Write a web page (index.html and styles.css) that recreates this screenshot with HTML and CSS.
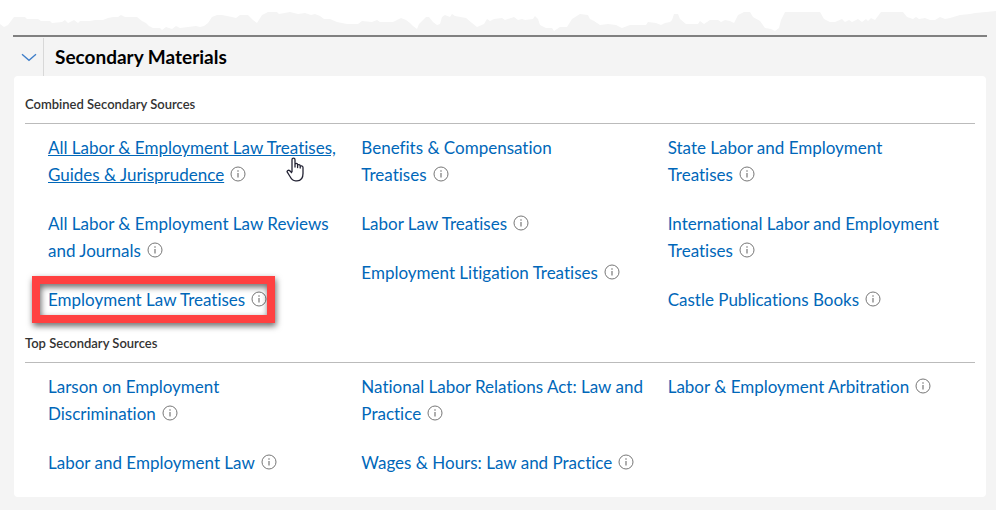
FILE: index.html
```html
<!DOCTYPE html>
<html lang="en">
<head>
    <title>Secondary Materials</title>
    <meta charset="UTF-8">
    <meta name="viewport" content="width=device-width, initial-scale=1.0">
    <link rel="stylesheet" href="styles.css">
</head>
<body>
    <svg width="0" height="0" class="sprite" aria-hidden="true">
        <symbol id="info" viewBox="0 0 16 16">
            <circle cx="8" cy="8" r="7" fill="none" stroke="#777" stroke-width="1"/>
            <path d="M8 7v4.5" stroke="#777" stroke-width="1.2"/>
            <circle cx="8" cy="5" r="0.8" fill="#777"/>
        </symbol>
    </svg>

    <svg class="torn-edge" viewBox="0 0 996 35" preserveAspectRatio="none" aria-hidden="true">
        <polygon fill="#fff" points="0,0 0,24 4,27 8,25 14,17 25,17 27,19 38,19 41,21 50,21 52,23 62,22 65,20 68,23 74,20 78,23 80,21 90,21 95,20 103,20 108,18 113,17 118,17 121,15 125,17 137,17 142,21 146,23 149,26 153,28 160,28 162,30 166,27 172,29 176,26 180,28 188,27 196,26 200,27 204,26 208,23 212,17 217,15 222,15 232,17 236,18 240,15 248,15 253,20 257,23 262,15 268,12 277,12 279,14 290,12 298,14 305,13 311,15 315,14 320,16 324,19 330,19 337,22 347,24 358,24 362,21 372,22 377,20 380,22 393,22 401,18 406,20 410,23 413,26 417,29 419,24 424,19 426,17 429,17 433,22 437,25 440,24 442,17 445,15 450,17 452,14 455,16 466,18 472,23 477,27 484,24 487,19 490,21 494,19 502,18 505,20 514,17 518,20 522,19 525,20 533,19 535,16 538,19 540,25 546,28 552,28 554,31 560,27 567,27 572,19 580,14 588,15 590,19 594,21 600,25 608,24 616,25 622,28 630,25 646,25 648,22 656,23 661,25 665,23 670,22 672,20 674,14 678,14 680,19 686,24 698,24 700,21 704,24 710,20 718,20 721,22 725,20 730,21 734,23 738,15 744,12 750,12 753,17 760,21 765,28 771,29 775,31 779,28 781,20 785,12 820,12 824,19 830,22 835,22 842,19 845,22 849,20 852,22 858,19 862,22 866,19 868,21 871,18 875,20 881,12 903,12 907,17 913,19 916,17 919,19 925,18 930,20 935,20 940,17 945,19 950,18 960,15 970,14 975,13 986,12 996,11 996,0"/>
    </svg>

    <main class="panel">
        <header class="panel-header">
            <button type="button" class="toggle" aria-label="Collapse Secondary Materials" aria-expanded="true">
                <svg width="16" height="9" viewBox="0 0 16 9" fill="none" stroke="#3e7ec9" stroke-width="1.3"><path d="M1 1.2L8 7.3L15 1.2"/></svg>
            </button>
            <h1>Secondary Materials</h1>
        </header>

        <div class="card">
            <section>
                <h2>Combined Secondary Sources</h2>
                <div class="columns">
                    <ul>
                        <li>
                            <a href="#" class="hovered">All Labor &amp; Employment Law Treatises, Guides &amp; Jurisprudence</a><button type="button" class="info" aria-label="Info"><svg><use href="#info"/></svg></button>
                            <svg class="pointer" viewBox="0 0 18 25" aria-hidden="true">
                                <path d="M6 15V2.8C6 .6 9 .6 9 2.8V10V7.6C9 6 11.6 6 11.6 7.8V10.5V8.6C11.6 7.2 14.2 7.2 14.2 9V11V9.8C14.2 8.4 17 8.6 17 10.4V16.5C17 21 14.6 23.8 11 23.8H9.5C6.5 23.8 5.3 22 4 19.5L1.3 15.2C.5 13.7 2.6 12.6 3.8 13.8L6 16" fill="#fff" stroke="#223" stroke-width="1.3" stroke-linejoin="round"/>
                            </svg>
                        </li>
                        <li><a href="#">All Labor &amp; Employment Law Reviews and Journals</a><button type="button" class="info" aria-label="Info"><svg><use href="#info"/></svg></button></li>
                        <li class="highlighted"><a href="#">Employment Law Treatises</a><button type="button" class="info" aria-label="Info"><svg><use href="#info"/></svg></button></li>
                    </ul>
                    <ul>
                        <li><a href="#">Benefits &amp; Compensation<br>Treatises</a><button type="button" class="info" aria-label="Info"><svg><use href="#info"/></svg></button></li>
                        <li><a href="#">Labor Law Treatises</a><button type="button" class="info" aria-label="Info"><svg><use href="#info"/></svg></button></li>
                        <li><a href="#">Employment Litigation Treatises</a><button type="button" class="info" aria-label="Info"><svg><use href="#info"/></svg></button></li>
                    </ul>
                    <ul>
                        <li><a href="#">State Labor and Employment Treatises</a><button type="button" class="info" aria-label="Info"><svg><use href="#info"/></svg></button></li>
                        <li><a href="#">International Labor and Employment Treatises</a><button type="button" class="info" aria-label="Info"><svg><use href="#info"/></svg></button></li>
                        <li><a href="#">Castle Publications Books</a><button type="button" class="info" aria-label="Info"><svg><use href="#info"/></svg></button></li>
                    </ul>
                </div>
            </section>

            <section>
                <h2>Top Secondary Sources</h2>
                <div class="columns">
                    <ul>
                        <li><a href="#">Larson on Employment Discrimination</a><button type="button" class="info" aria-label="Info"><svg><use href="#info"/></svg></button></li>
                        <li><a href="#">Labor and Employment Law</a><button type="button" class="info" aria-label="Info"><svg><use href="#info"/></svg></button></li>
                    </ul>
                    <ul>
                        <li><a href="#">National Labor Relations Act: Law and Practice</a><button type="button" class="info" aria-label="Info"><svg><use href="#info"/></svg></button></li>
                        <li><a href="#">Wages &amp; Hours: Law and Practice</a><button type="button" class="info" aria-label="Info"><svg><use href="#info"/></svg></button></li>
                    </ul>
                    <ul>
                        <li><a href="#">Labor &amp; Employment Arbitration</a><button type="button" class="info" aria-label="Info"><svg><use href="#info"/></svg></button></li>
                    </ul>
                </div>
            </section>
        </div>
    </main>
</body>
</html>
```
FILE: styles.css
```css
* {
    box-sizing: border-box;
}
body {
    margin: 0;
    background: #f4f4f4;
    font-family: Lato, "Liberation Sans", sans-serif;
    font-variant-ligatures: none;
    color: #333;
}
.sprite {
    position: absolute;
}
.torn-edge {
    display: block;
    width: 100%;
    height: 35px;
}
.panel {
    margin: 0 9px 0 13px;
    border-top: 2px solid #808080;
}
.panel-header {
    display: flex;
    align-items: stretch;
    height: 39px;
    padding-top: 1px;
}
.toggle {
    display: flex;
    align-items: center;
    justify-content: center;
    width: 31px;
    padding: 0 0 0 2px;
    border: none;
    border-right: 1px solid #d8d8d8;
    background: none;
    cursor: pointer;
}
h1 {
    margin: 0;
    padding-left: 11px;
    font-size: 19px;
    line-height: 38px;
    font-weight: 700;
    color: #000;
}
.card {
    margin: 0 1px;
    padding: 0 11px 19px;
    border-radius: 4px;
    background: #fff;
}
h2 {
    margin: 0;
    padding: 18px 0 9px;
    border-bottom: 1px solid #bbb;
    font-size: 13px;
    line-height: 20px;
    font-weight: 600;
}
.columns {
    display: grid;
    grid-template-columns: 313fr 306fr 307fr;
    padding: 10px 0 2px 23px;
}
ul {
    display: flex;
    flex-direction: column;
    gap: 22px;
    margin: 0;
    padding: 0 24px 0 0;
    list-style: none;
}
li {
    position: relative;
    font-size: 17px;
    line-height: 27px;
}
/* right padding holds the info icon, so it never wraps on its own */
a {
    padding-right: 22px;
    color: #0067b9;
    text-decoration: none;
}
a:hover,
a.hovered {
    text-decoration: underline;
}
.info {
    width: 16px;
    height: 16px;
    margin: 0 0 0 -16px;
    padding: 0;
    border: none;
    background: none;
    vertical-align: -1px;
    cursor: pointer;
}
.info svg {
    display: block;
    width: 16px;
    height: 16px;
}
.pointer {
    position: absolute;
    top: 23px;
    left: 238px;
    width: 18px;
    height: 25px;
}
/* red callout box around a link */
.highlighted {
    align-self: flex-start;
}
.highlighted::after {
    content: "";
    position: absolute;
    top: -10px;
    right: -8px;
    bottom: -10px;
    left: -16px;
    border: 8px solid #ff4141;
    filter: drop-shadow(1px 3px 3px rgba(0, 0, 0, 0.6));
    pointer-events: none;
}
```
